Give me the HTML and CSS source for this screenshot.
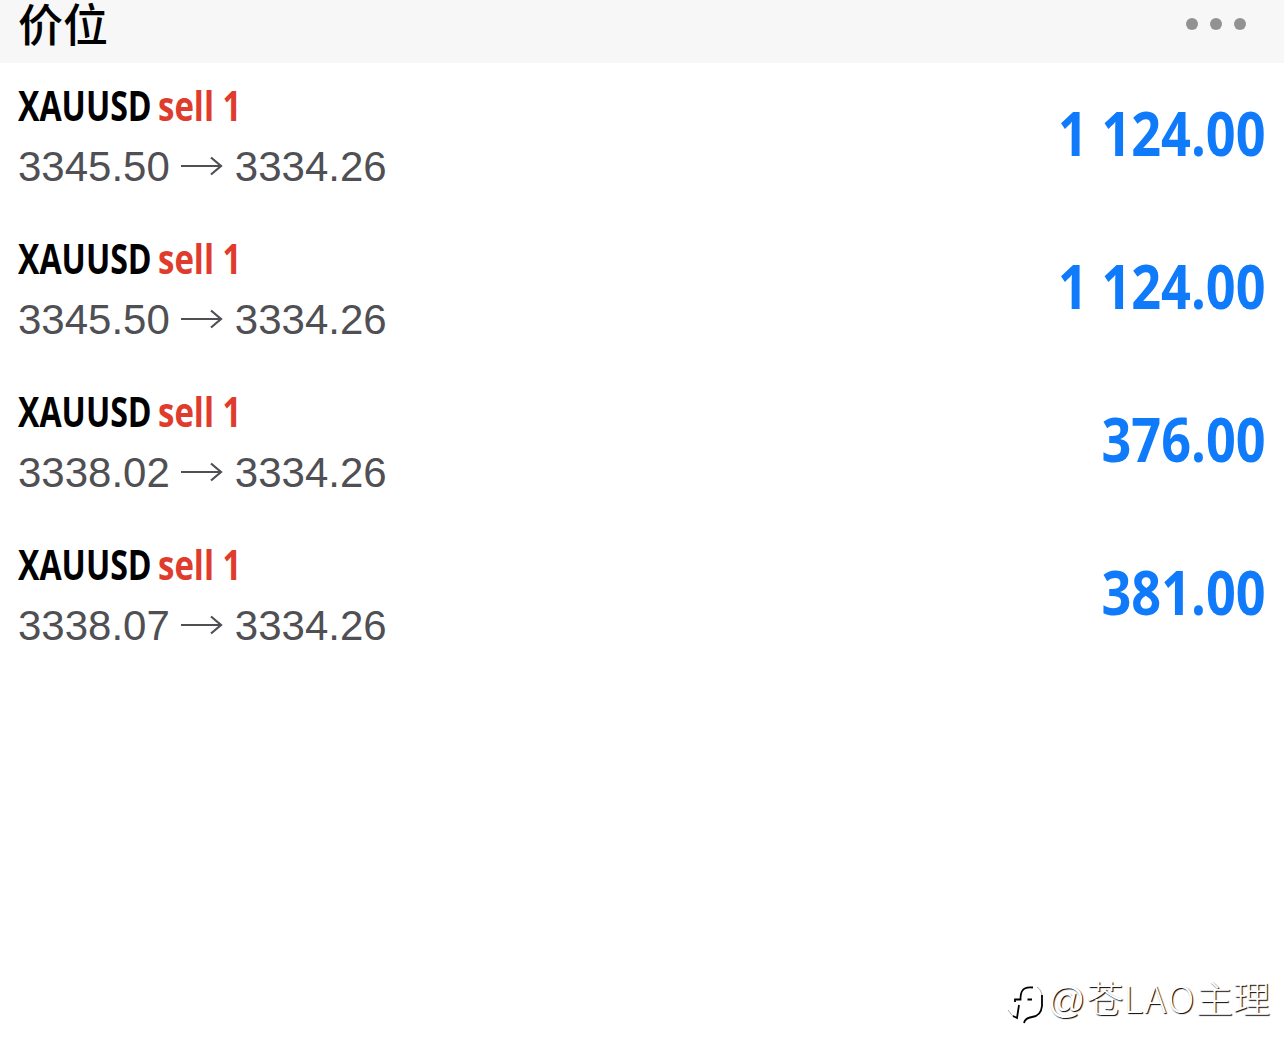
FILE: index.html
```html
<!DOCTYPE html>
<html lang="zh-CN">
<head>
  <meta charset="utf-8">
  <title>价位</title>
  <link rel="stylesheet" href="styles.css">
</head>
<body>
  <header class="bar">
    <h1>价位</h1>
    <div class="more"><i></i><i></i><i></i></div>
  </header>

  <main class="list">
    <div class="row">
      <div>
        <p class="name"><span class="symbol">XAUUSD</span><span class="side">sell 1</span></p>
        <p class="prices">3345.50<svg class="arrow" viewBox="0 0 42 22"><path d="M0 10H40M30 1.5L40 10L30 18.5"/></svg>3334.26</p>
      </div>
      <div class="profit">1 124.00</div>
    </div>
    <div class="row">
      <div>
        <p class="name"><span class="symbol">XAUUSD</span><span class="side">sell 1</span></p>
        <p class="prices">3345.50<svg class="arrow" viewBox="0 0 42 22"><path d="M0 10H40M30 1.5L40 10L30 18.5"/></svg>3334.26</p>
      </div>
      <div class="profit">1 124.00</div>
    </div>
    <div class="row">
      <div>
        <p class="name"><span class="symbol">XAUUSD</span><span class="side">sell 1</span></p>
        <p class="prices">3338.02<svg class="arrow" viewBox="0 0 42 22"><path d="M0 10H40M30 1.5L40 10L30 18.5"/></svg>3334.26</p>
      </div>
      <div class="profit">376.00</div>
    </div>
    <div class="row">
      <div>
        <p class="name"><span class="symbol">XAUUSD</span><span class="side">sell 1</span></p>
        <p class="prices">3338.07<svg class="arrow" viewBox="0 0 42 22"><path d="M0 10H40M30 1.5L40 10L30 18.5"/></svg>3334.26</p>
      </div>
      <div class="profit">381.00</div>
    </div>
  </main>

  <div class="mark">
    <svg class="logo" viewBox="0 0 40 44">
      <path class="thin" d="M1 29Q4 35 10 37M30 6Q35 9 35 16"/>
      <path d="M26 6.5Q18 5.5 15.500 9.500Q13.500 12 13.500 18.500H8V21M20.500 18.500H25M12 24L10 37L6 35M35 14V25Q34 35 25 36Q18 37 17 42"/>
    </svg>
    <span><span class="at">@</span>苍<span class="latin">LAO</span>主理</span>
  </div>
</body>
</html>
```

FILE: styles.css
```css
* {
  box-sizing: border-box;
}

body {
  margin: 0;
  height: 1061px;
  position: relative;
  overflow: hidden;
  background: #fff;
  font-family: "Liberation Sans", "Noto Sans CJK SC", sans-serif;
}

h1,
p {
  margin: 0;
}

.bar {
  display: flex;
  justify-content: space-between;
  height: 63px;
  padding: 0 38px 0 18px;
  background: #f7f7f7;
}

.bar h1 {
  height: 63px;
  font: 500 45px/46px "Noto Sans CJK SC", sans-serif;
  color: #000;
}

.more {
  display: flex;
  gap: 12px;
  padding-top: 18px;
}

.more i {
  width: 12px;
  height: 12px;
  border-radius: 50%;
  background: #929292;
}

.row {
  display: flex;
  justify-content: space-between;
  height: 153px;
  padding: 17px 18px 0;
}

.name {
  display: flex;
  height: 50px;
  font: 660 42px/50px "Open Sans", sans-serif;
}

.symbol {
  width: 140px;
  color: #000;
  transform: scaleX(0.765);
  transform-origin: left;
}

.side {
  color: #e03c2d;
  white-space: nowrap;
  transform: scaleX(0.785);
  transform-origin: left;
}

.prices {
  display: flex;
  align-items: center;
  height: 48px;
  margin-top: 13px;
  font-size: 42px;
  line-height: 48px;
  color: #4f4f54;
}

.arrow {
  width: 42px;
  height: 22px;
  margin: 0 12px 0 11px;
  fill: none;
  stroke: #4f4f54;
  stroke-width: 2.2;
}

.profit {
  padding-top: 18px;
  font: 660 60px/70px "Open Sans", sans-serif;
  color: #0f7bfb;
  transform: scaleX(0.87);
  transform-origin: right;
}

/* white text, only its shadow shows on the page */
.mark {
  position: absolute;
  right: 14px;
  bottom: 32px;
  display: flex;
  align-items: center;
  height: 60px;
  font: 300 37px/56px "Noto Sans CJK SC", sans-serif;
  color: #fff;
  text-shadow: 1px 1px 1px #000;
}

.at {
  margin-right: 1px;
  font-family: "Liberation Sans", sans-serif;
}

.latin {
  letter-spacing: 1.6px;
}

.logo {
  width: 40px;
  height: 44px;
  margin: 0 1px -8px 0;
  fill: none;
  stroke: #000;
  stroke-width: 1.8;
}

.logo .thin {
  stroke: #aaa;
  stroke-width: 1;
}
```
